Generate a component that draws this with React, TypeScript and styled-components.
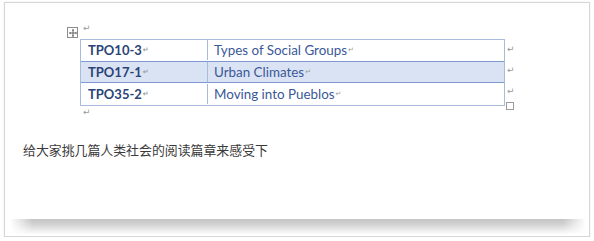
import React from "react";
import styled, { createGlobalStyle } from "styled-components";

const GlobalStyle = createGlobalStyle`
  html, body {
    margin: 0;
    padding: 0;
    background: #ffffff;
  }
`;

const Frame = styled.div`
  box-sizing: border-box;
  width: 586px;
  height: 235px;
  margin: 2px 0 0 4px;
  border: 1px solid #d6d6d6;
  box-shadow: 0 0 2px rgba(0, 0, 0, 0.08);
  background: #fff;
  display: flex;
  flex-direction: column;
`;

const Page = styled.div`
  flex: 1;
  padding: 14px 0 0 18px;
  display: flex;
  flex-direction: column;
`;

const DocBlock = styled.div`
  margin-left: 57px;
  display: flex;
  flex-direction: column;
`;

const Mark = styled.span<{ $size?: number }>`
  font-family: "DejaVu Sans", sans-serif;
  font-size: ${p => p.$size ?? 9}px;
  color: #999;
  line-height: 1;
`;

const ParaLine = styled.div<{ $indent: number; $height: number }>`
  height: ${p => p.$height}px;
  padding-left: ${p => p.$indent}px;
  display: flex;
  align-items: center;
`;

const TableRow = styled.div`
  position: relative;
  display: flex;
  align-items: flex-start;
`;

const MoveHandle = styled.div`
  position: absolute;
  left: -13px;
  top: -12px;
  width: 9px;
  height: 9px;
  border: 1px solid #8c8c8c;
  background: #fff;
  display: flex;
  align-items: center;
  justify-content: center;
`;

const Table = styled.div`
  width: 425px;
  border: 1px solid #a9bbdd;
  display: flex;
  flex-direction: column;
  box-sizing: border-box;
`;

const Row = styled.div<{ $shaded?: boolean }>`
  display: grid;
  grid-template-columns: 126px 1fr;
  height: 20px;
  background: ${p => (p.$shaded ? "#dae3f3" : "#fff")};
  border-top: 1px solid ${p => (p.$shaded ? "#7e9ad0" : "transparent")};
  border-bottom: 1px solid ${p => (p.$shaded ? "#7e9ad0" : "transparent")};
  &:first-child {
    border-top: none;
  }
`;

const Cell = styled.div<{ $bold?: boolean }>`
  display: flex;
  align-items: center;
  padding-left: ${p => (p.$bold ? 7 : 6)}px;
  font-family: Lato, "Liberation Sans", sans-serif;
  font-size: ${p => (p.$bold ? 13 : 13.4)}px;
  font-weight: ${p => (p.$bold ? 700 : 400)};
  color: ${p => (p.$bold ? "#2a4478" : "#3a5899")};
  border-left: ${p => (p.$bold ? "none" : "1px solid #a9bbdd")};
  white-space: nowrap;
  gap: 1px;
`;

const EndMarks = styled.div`
  display: flex;
  flex-direction: column;
  padding-left: 2px;
`;

const EndMark = styled.div`
  height: 21px;
  display: flex;
  align-items: center;
`;

const ResizeBox = styled.div`
  width: 6px;
  height: 6px;
  border: 1px solid #9a9a9a;
  background: #fff;
  margin-left: -1px;
`;

const Body = styled.p`
  margin: 27px 0 0 0;
  font-family: "Noto Sans CJK SC", "Liberation Sans", sans-serif;
  font-size: 12.9px;
  color: #3a3a3a;
  line-height: 17px;
`;

const Spacer = styled.div`
  flex: 1;
`;

const ShadowBand = styled.div`
  height: 15px;
  margin: 0 3px 2px 5px;
  background: linear-gradient(to bottom, #c4c4c4 0%, #d2d2d2 35%, #ececec 75%, #fbfbfb 100%);
  -webkit-mask-image: linear-gradient(to right, transparent 0%, #000 4%, #000 96%, transparent 100%);
  mask-image: linear-gradient(to right, transparent 0%, #000 4%, #000 96%, transparent 100%);
`;

const rows = [
  { code: "TPO10-3", title: "Types of Social Groups" },
  { code: "TPO17-1", title: "Urban Climates", shaded: true },
  { code: "TPO35-2", title: "Moving into Pueblos" },
];

const MoveIcon = () => (
  <svg width="8" height="8" viewBox="0 0 8 8">
    <path d="M4 0.5 L4 7.5 M0.5 4 L7.5 4" stroke="#555" strokeWidth="0.9" fill="none" />
    <path d="M4 0 L2.8 1.5 L5.2 1.5 Z M4 8 L2.8 6.5 L5.2 6.5 Z M0 4 L1.5 2.8 L1.5 5.2 Z M8 4 L6.5 2.8 L6.5 5.2 Z" fill="#555" />
  </svg>
);

const App = () => {
  return (
    <>
      <GlobalStyle />
      <Frame>
        <Page>
          <DocBlock>
            <ParaLine $indent={3} $height={22}>
              <Mark>↵</Mark>
            </ParaLine>
            <TableRow>
              <MoveHandle>
                <MoveIcon />
              </MoveHandle>
              <Table>
                {rows.map(r => (
                  <Row key={r.code} $shaded={r.shaded}>
                    <Cell $bold>
                      {r.code}
                      <Mark $size={7}>↵</Mark>
                    </Cell>
                    <Cell>
                      {r.title}
                      <Mark $size={7}>↵</Mark>
                    </Cell>
                  </Row>
                ))}
              </Table>
              <EndMarks>
                <EndMark>
                  <Mark>↵</Mark>
                </EndMark>
                <EndMark>
                  <Mark>↵</Mark>
                </EndMark>
                <EndMark>
                  <Mark>↵</Mark>
                </EndMark>
                <ResizeBox />
              </EndMarks>
            </TableRow>
            <ParaLine $indent={3} $height={4}>
              <Mark>↵</Mark>
            </ParaLine>
          </DocBlock>
          <Body>给大家挑几篇人类社会的阅读篇章来感受下</Body>
          <Spacer />
        </Page>
        <ShadowBand />
      </Frame>
    </>
  );
};

export default App;
